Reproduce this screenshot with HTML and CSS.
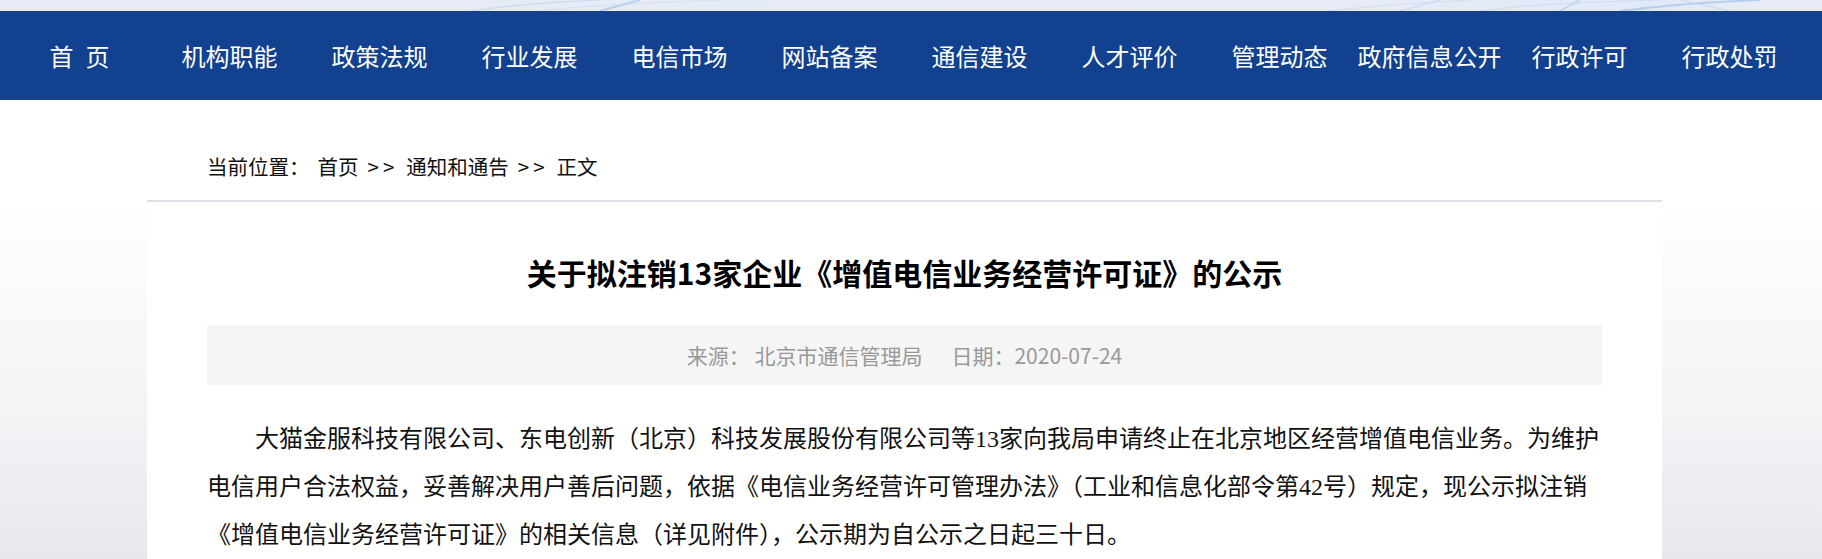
FILE: index.html
```html
<!DOCTYPE html>
<html lang="zh-CN">
<head>
<meta charset="utf-8">
<title>关于拟注销13家企业《增值电信业务经营许可证》的公示</title>
<link rel="stylesheet" href="styles.css">
</head>
<body>
<header class="header">
  <div class="banner">
    <svg class="banner-art" width="1822" height="11" viewBox="0 0 1822 11" preserveAspectRatio="none">
      <path d="M470 11 C520 4 560 2 600 0" stroke="#c9d9f2" stroke-width="1.2" fill="none"/>
      <path d="M540 11 C580 6 640 3 720 0" stroke="#d3e0f4" stroke-width="1" fill="none"/>
      <path d="M600 11 L640 0" stroke="#b9cff0" stroke-width="2" fill="none"/>
      <path d="M1330 11 C1380 5 1420 3 1470 0" stroke="#d0def4" stroke-width="1" fill="none"/>
      <path d="M1400 11 L1440 0" stroke="#c6d8f2" stroke-width="1.2" fill="none"/>
      <path d="M1480 11 C1530 4 1590 2 1660 0" stroke="#cfddf3" stroke-width="1" fill="none"/>
      <path d="M1560 11 L1580 0" stroke="#bfd3f1" stroke-width="1.5" fill="none"/>
      <path d="M1620 11 C1660 6 1700 2 1760 0" stroke="#b7cdef" stroke-width="2" fill="none"/>
      <path d="M1680 0 L1730 11" stroke="#c9daf3" stroke-width="1" fill="none"/>
    </svg>
  </div>
  <nav class="nav">
    <ul class="nav-list">
      <li class="nav-item">首&ensp;页</li>
      <li class="nav-item">机构职能</li>
      <li class="nav-item">政策法规</li>
      <li class="nav-item">行业发展</li>
      <li class="nav-item">电信市场</li>
      <li class="nav-item">网站备案</li>
      <li class="nav-item">通信建设</li>
      <li class="nav-item">人才评价</li>
      <li class="nav-item">管理动态</li>
      <li class="nav-item">政府信息公开</li>
      <li class="nav-item">行政许可</li>
      <li class="nav-item">行政处罚</li>
    </ul>
  </nav>
</header>

<div class="crumb-row">
  <div class="container crumb">
    <span class="crumb-label">当前位置：</span><span>首页</span><span class="sep">&gt;&gt;</span><span>通知和通告</span><span class="sep">&gt;&gt;</span><span>正文</span>
  </div>
</div>

<main class="main">
  <article class="container card">
    <h1 class="title">关于拟注销13家企业《增值电信业务经营许可证》的公示</h1>
    <div class="meta"><span>来源： 北京市通信管理局</span><span class="meta-date">日期：2020-07-24</span></div>
    <p class="body-text">大猫金服科技有限公司、东电创新（北京）科技发展股份有限公司等13家向我局申请终止在北京地区经营增值电信业务。为维护电信用户合法权益，妥善解决用户善后问题，依据《电信业务经营许可管理办法》（工业和信息化部令第42号）规定，现公示拟注销《增值电信业务经营许可证》的相关信息（详见附件），公示期为自公示之日起三十日。</p>
  </article>
</main>
</body>
</html>
```

FILE: styles.css
```css
* { box-sizing: border-box; }

body {
  margin: 0;
  background: #ffffff;
  font-family: "Noto Sans CJK SC", "Noto Sans", sans-serif;
  color: #000;
}

.banner {
  height: 11px;
  background: linear-gradient(90deg, #e9ecf6 0%, #e7ebf6 30%, #e4eaf7 40%, #e9ecf6 55%, #e6ebf6 75%, #e2e9f7 90%, #e9ecf6 100%);
  overflow: hidden;
}

.banner-art { display: block; }

.nav {
  height: 89px;
  background: #11418f;
}

.nav-list {
  display: flex;
  margin: 0;
  padding: 0 0 0 4.5px;
  list-style: none;
}

.nav-item {
  width: 150px;
  flex: 0 0 150px;
  text-align: center;
  line-height: 89px;
  font-size: 24px;
  color: #ffffff;
  white-space: nowrap;
}

.container {
  width: 1515px;
  margin-left: 147px;
}

.crumb-row {
  height: 100px;
  background: #ffffff;
}

.crumb {
  padding: 48px 60px 0;
  font-size: 20.5px;
  line-height: 37px;
  color: #111;
  white-space: nowrap;
}

.crumb-label { margin-right: 8px; }

.sep {
  margin: 0 8px 0 9px;
  letter-spacing: 4px;
}

.main {
  background-color: #e7e8ec;
  background-image: linear-gradient(180deg, #ffffff 0%, #f8f9fa 30%, #f2f3f5 60%, #e7e8ec 100%);
  background-size: 100% 360px;
  background-repeat: no-repeat;
  padding-bottom: 40px;
}

.card {
  background: #ffffff;
  border-top: 2px solid #dde1e6;
  padding: 48px 60px 40px;
}

.title {
  margin: 0;
  font-size: 30px;
  line-height: 45px;
  font-weight: 700;
  text-align: center;
  color: #000;
}

.meta {
  margin-top: 30px;
  height: 60px;
  background: #f5f5f5;
  text-align: center;
  font-size: 21px;
  line-height: 60px;
  color: #999;
  white-space: nowrap;
}

.meta-date { margin-left: 29px; }

.body-text {
  margin: 30px 0 0;
  font-family: "Liberation Serif", "Noto Sans CJK SC", serif;
  font-size: 24px;
  line-height: 48px;
  text-indent: 2em;
  color: #111;
}
```
